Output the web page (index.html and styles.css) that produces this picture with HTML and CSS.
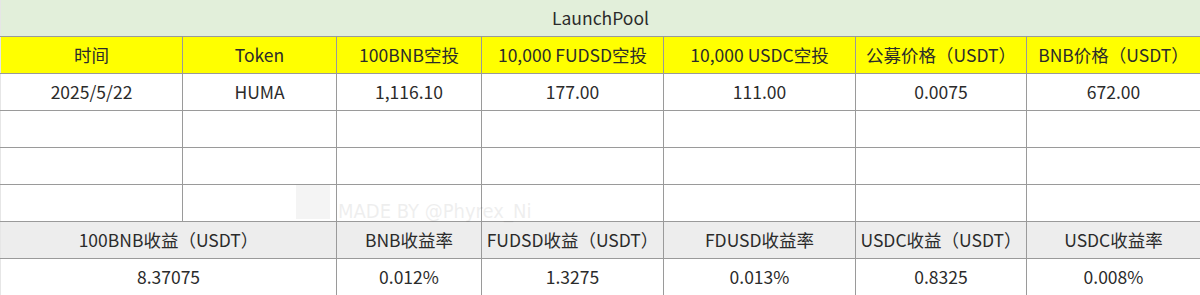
FILE: index.html
```html
<!DOCTYPE html>
<html lang="zh-CN">
<head>
<meta charset="utf-8">
<title>LaunchPool</title>
<link rel="stylesheet" href="styles.css">
</head>
<body>
<div class="sheet">
  <table class="grid">
    <colgroup>
      <col class="c1"><col class="c2"><col class="c3"><col class="c4"><col class="c5"><col class="c6"><col class="c7">
    </colgroup>
    <tr class="title"><td colspan="7">LaunchPool</td></tr>
    <tr class="head">
      <td>时间</td><td>Token</td><td>100BNB空投</td><td>10,000 FUDSD空投</td><td>10,000 USDC空投</td><td>公募价格（USDT）</td><td>BNB价格（USDT）</td>
    </tr>
    <tr class="data">
      <td>2025/5/22</td><td>HUMA</td><td>1,116.10</td><td>177.00</td><td>111.00</td><td>0.0075</td><td>672.00</td>
    </tr>
    <tr class="data"><td></td><td></td><td></td><td></td><td></td><td></td><td></td></tr>
    <tr class="data"><td></td><td></td><td></td><td></td><td></td><td></td><td></td></tr>
    <tr class="data"><td></td><td></td><td></td><td></td><td></td><td></td><td></td></tr>
    <tr class="sub">
      <td colspan="2">100BNB收益（USDT）</td><td>BNB收益率</td><td>FUDSD收益（USDT）</td><td>FDUSD收益率</td><td>USDC收益（USDT）</td><td>USDC收益率</td>
    </tr>
    <tr class="data">
      <td colspan="2">8.37075</td><td>0.012%</td><td>1.3275</td><td>0.013%</td><td>0.8325</td><td>0.008%</td>
    </tr>
  </table>
  <div class="watermark"><span class="wm-logo"></span><span class="wm-text">MADE BY @Phyrex_Ni</span></div>
</div>
</body>
</html>
```
FILE: styles.css
```css
html, body {
  margin: 0;
  padding: 0;
  background: #ffffff;
}
.sheet {
  position: relative;
  width: 1200px;
  height: 295px;
  overflow: hidden;
}
.grid {
  border-collapse: collapse;
  table-layout: fixed;
  width: 1200px;
  font-family: "Noto Sans CJK SC", "Noto Sans", sans-serif;
  font-size: 17.5px;
  color: #2b2b2b;
}
.c1 { width: 182px; }
.c2 { width: 154px; }
.c3 { width: 145px; }
.c4 { width: 182px; }
.c5 { width: 192px; }
.c6 { width: 171px; }
.c7 { width: 174px; }
.grid td {
  height: 36px;
  padding: 0;
  text-align: center;
  vertical-align: middle;
  border: 1px solid #9a9a9a;
  white-space: nowrap;
  line-height: 20px;
}
.grid tr:first-child td { border-top: none; }
.grid td:first-child { border-left: 1px solid #e6e6e6; }
.title td {
  background: #e2efda;
}
.head td {
  background: #ffff00;
}
.sub td {
  background: #ededed;
}
.watermark {
  position: absolute;
  left: 296px;
  top: 181px;
  display: flex;
  align-items: center;
  gap: 8px;
  opacity: 0.07;
  pointer-events: none;
}
.wm-logo {
  width: 34px;
  height: 34px;
  background: #777;
}
.wm-text {
  font-family: "DejaVu Sans Condensed", "DejaVu Sans", sans-serif;
  font-size: 20px;
  color: #222;
  padding-top: 18px;
}
```
